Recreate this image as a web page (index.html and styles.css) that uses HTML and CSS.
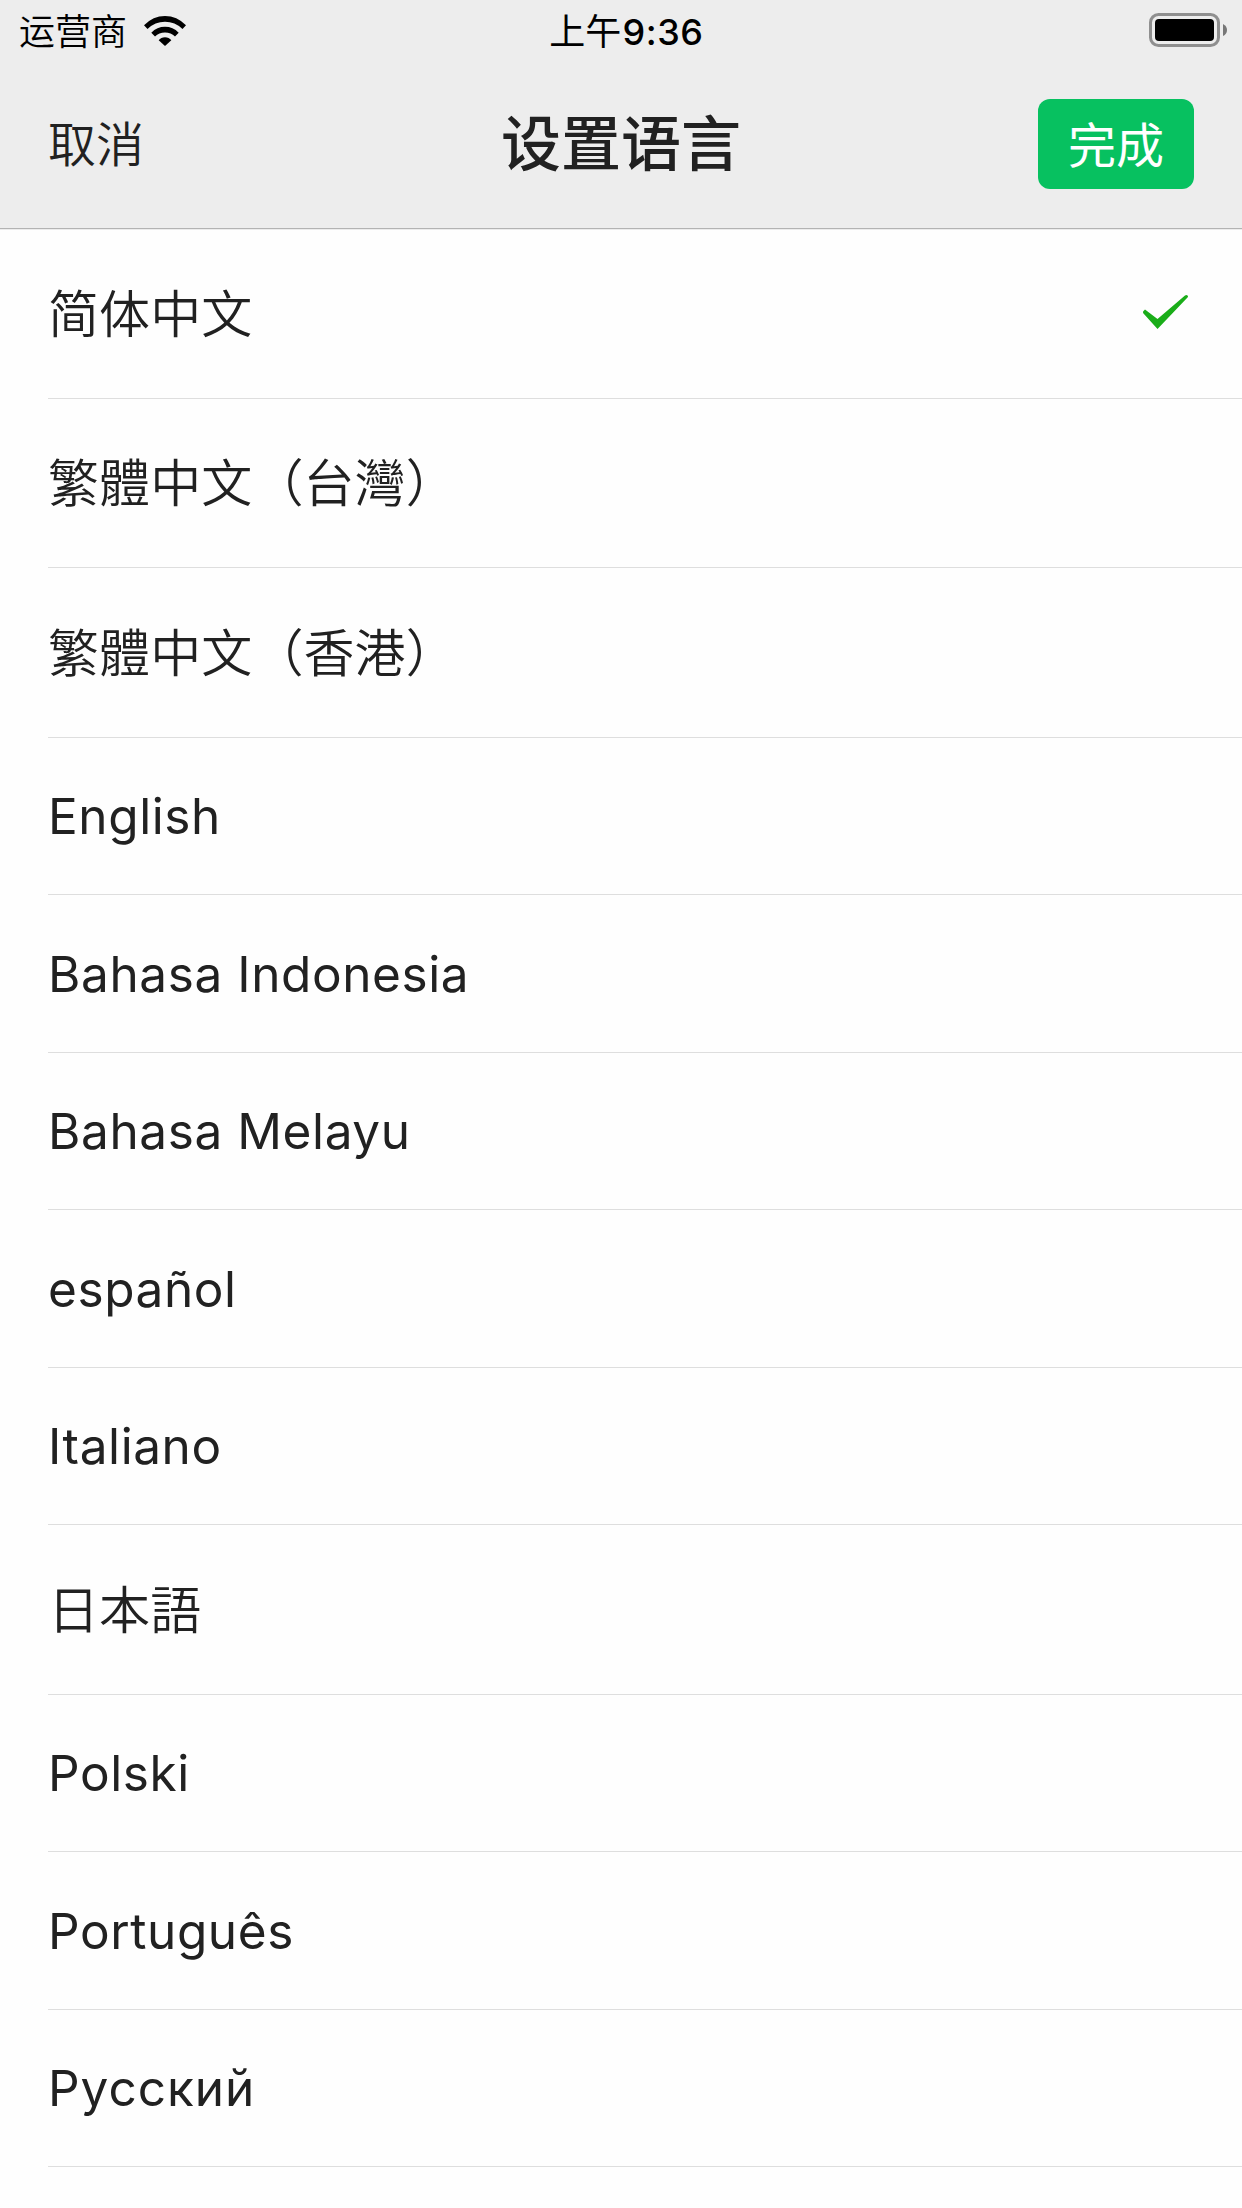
FILE: index.html
```html
<!DOCTYPE html>
<html lang="zh-CN">
<head>
<meta charset="utf-8">
<title>设置语言</title>
<link rel="stylesheet" href="styles.css">
</head>
<body>
<header class="header">
  <div class="status">
    <div class="carrier">
      <span class="raised">运营商</span>
      <svg class="wifi" width="42" height="30" viewBox="0 0 42 30">
        <path d="M0 9.3Q9 0 21 0T42 9.3L38.5 13Q31 5.8 21 5.8T3.5 13Z"/>
        <path d="M7.3 16.7Q13 10.8 21 10.8T34.7 16.7L31 20.4Q27 16.6 21 16.6T11 20.4Z"/>
        <path d="M14.7 24.2Q17 21.3 21 21.3T27.3 24.2L21 30Z"/>
      </svg>
    </div>
    <div class="time">上午<span class="digits">9:36</span></div>
    <div class="power">
      <svg width="78" height="34" viewBox="0 0 78 34">
        <rect x="1.5" y="1.5" width="68" height="31" rx="8" fill="none" stroke="#8f8f8f" stroke-width="3"/>
        <rect x="6" y="6" width="59" height="22" rx="4"/>
        <path d="M74 11Q78 13 78 17T74 23Z" fill="#777"/>
      </svg>
    </div>
  </div>
  <nav class="nav">
    <div class="nav-side"><span class="cancel">取消</span></div>
    <h1 class="title">设置语言</h1>
    <div class="nav-side nav-end"><button class="done">完成</button></div>
  </nav>
</header>
<ul class="list">
  <li class="row cjk"><span>简体中文</span>
    <svg class="check" width="46" height="36" viewBox="0 0 46 36"><path d="M.5 18.500Q-.5 17 .5 16L2 14.500 14.500 24 42 .5Q43.500-.5 44.500.500T44.500 2.500L14.500 34Z"/></svg>
  </li>
  <li class="row cjk" lang="zh-TW"><span>繁體中文（台灣）</span></li>
  <li class="row cjk" lang="zh-TW"><span>繁體中文（香港）</span></li>
  <li class="row"><span>English</span></li>
  <li class="row"><span>Bahasa Indonesia</span></li>
  <li class="row"><span>Bahasa Melayu</span></li>
  <li class="row"><span>español</span></li>
  <li class="row"><span>Italiano</span></li>
  <li class="row cjk" lang="ja"><span>日本語</span></li>
  <li class="row"><span>Polski</span></li>
  <li class="row"><span>Português</span></li>
  <li class="row" lang="ru"><span>Русский</span></li>
</ul>
</body>
</html>
```
FILE: styles.css
```css
* { box-sizing: border-box; }

body {
  margin: 0;
  height: 2208px;
  overflow: hidden;
  background: #fefefe;
  color: #212121;
  font-family: "Noto Sans CJK SC", sans-serif;
}

.header {
  height: 229px;
  background: #ededed;
  border-bottom: 1px solid #b3b3b3;
  box-shadow: 0 1px 0 #ececec;
}

.status {
  display: grid;
  grid-template-columns: 1fr auto 1fr;
  align-items: center;
  height: 60px;
  padding: 0 15px 0 19px;
  color: #000;
  font-size: 36px;
  line-height: 60px;
}

.carrier {
  display: flex;
  align-items: center;
  gap: 17px;
  font-weight: 350;
}

.raised {
  padding-bottom: 6px;
  line-height: 54px;
}

.time {
  padding: 0 0 2px 7px;
  line-height: 58px;
  font-weight: 400;
}

.digits {
  margin-left: 1px;
  font-family: Inter, sans-serif;
  font-size: 36px;
  font-weight: 550;
  letter-spacing: 0.6px;
}

.wifi { margin-bottom: 2px; }

.power {
  display: flex;
  justify-content: flex-end;
  margin-bottom: 2px;
}

.power svg { margin-bottom: 2px; }

.nav {
  display: grid;
  grid-template-columns: 1fr auto 1fr;
  align-items: start;
  height: 168px;
  padding: 39px 48px 0;
}

.nav-side {
  display: flex;
  height: 90px;
  font-size: 48px;
}

.nav-end { justify-content: flex-end; }

.cancel {
  font-weight: 350;
  line-height: 85px;
}

.title {
  margin: 0;
  font-size: 60px;
  font-weight: 500;
  line-height: 82px;
}

.done {
  width: 156px;
  height: 90px;
  padding: 0 0 4px;
  border: 0;
  border-radius: 12px;
  background: #07c160;
  color: #fff;
  font: 48px/86px "Noto Sans CJK SC", sans-serif;
}

.list {
  margin: 0 0 0 48px;
  padding: 0;
  list-style: none;
}

.row {
  display: flex;
  align-items: center;
  justify-content: space-between;
  height: 157.5px;
  padding-right: 53px;
  border-bottom: 1px solid #dedede;
  font-family: Inter, sans-serif;
  font-size: 49.5px;
  line-height: 60px;
  letter-spacing: 0.6px;
}

.row:lang(ru) { letter-spacing: 1px; }

.cjk {
  height: 169.6px;
  font-family: "Noto Sans CJK SC", sans-serif;
  font-size: 51px;
  font-weight: 350;
  letter-spacing: 0.1px;
}

.cjk span { padding-bottom: 5px; }

.cjk:lang(ja) { font-family: "Noto Sans CJK JP", sans-serif; }

.check { fill: #1aad19; }
```
